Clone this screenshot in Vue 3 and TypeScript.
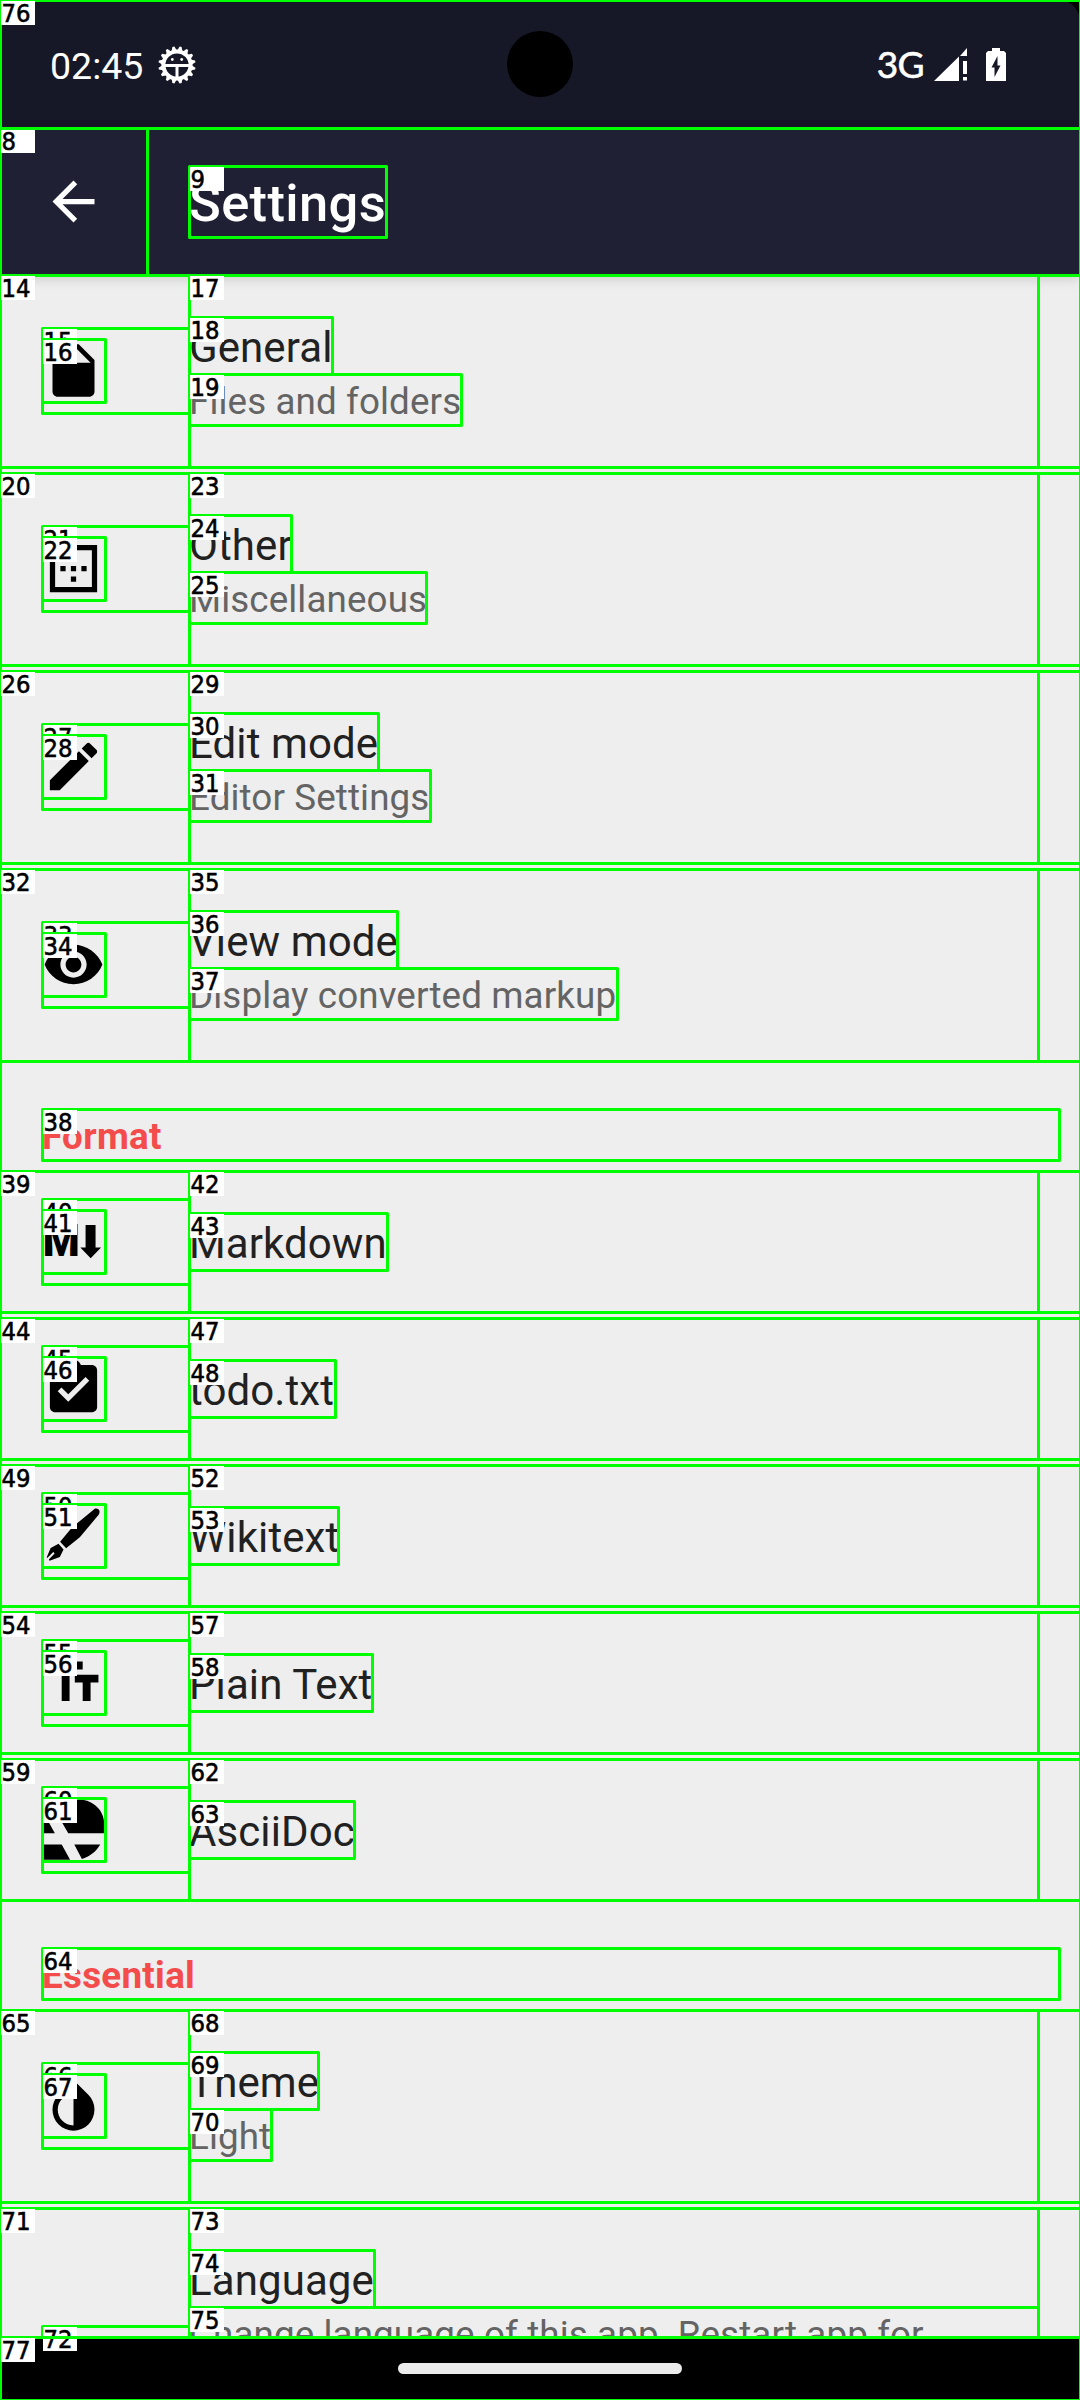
<script setup lang="ts">
interface Item {
  title: string
  summary?: string
  icon: string
}
interface Section {
  heading?: string
  items: Item[]
}
type Mark = [label: string, x1: number, y1: number, x2: number, y2: number]

const icons: Record<string, string> = {
  file: 'M6 2c-1.1 0-1.99.9-1.99 2L4 20c0 1.1.89 2 1.99 2H18c1.1 0 2-.9 2-2V8l-6-6H6zm7 7V3.5L18.5 9H13z',
  border: 'M13 7h-2v2h2V7zm0 4h-2v2h2v-2zm4 0h-2v2h2v-2zM3 3v18h18V3H3zm16 16H5V5h14v14zm-6-4h-2v2h2v-2zm-4-4H7v2h2v-2z',
  edit: 'M3 17.25V21h3.75L17.81 9.94l-3.75-3.75L3 17.25zM20.71 7.04c.39-.39.39-1.02 0-1.41l-2.34-2.34c-.39-.39-1.02-.39-1.41 0l-1.83 1.83 3.75 3.75 1.83-1.83z',
  eye: 'M12 4.5C7 4.5 2.73 7.61 1 12c1.73 4.39 6 7.5 11 7.5s9.27-3.11 11-7.5c-1.73-4.39-6-7.5-11-7.5zM12 17c-2.76 0-5-2.24-5-5s2.24-5 5-5 5 2.24 5 5-2.24 5-5 5zm0-8c-1.66 0-3 1.34-3 3s1.34 3 3 3 3-1.34 3-3-1.34-3-3-3z',
  markdown: 'M16.6 5.7h3.8v8.6h2.1L18.55 18.4 14.6 14.3h2z',
  todo: 'M19 3h-4.18C14.4 1.84 13.3 1 12 1c-1.3 0-2.4.84-2.82 2H5c-1.1 0-2 .9-2 2v14c0 1.1.9 2 2 2h14c1.1 0 2-.9 2-2V5c0-1.1-.9-2-2-2zm-7 0c.55 0 1 .45 1 1s-.45 1-1 1-1-.45-1-1 .45-1 1-1zm-2 14l-4-4 1.41-1.41L10 14.17l6.59-6.59L18 9l-8 8z',
  pen: 'M21.9 3.1c.2-.9-.9-1.6-1.8-1.3L11.5 8.9 6.9 14.4l2.3 2.5 5.2-4.2L21.5 4.2c.2-.3.4-.7.4-1.1zM6.3 15.1 8.2 17.3 6.8 20.2 2.9 21.6 2.6 21.1 4.8 18.9 4.3 18.3 2 20.6 1.8 20.3 3.3 16.8z',
  text: 'M2.5 4v3h5v12h3V7h5V4h-13zm19 5h-9v3h3v7h3v-7h3V9z',
  ascii: 'M2.5.5H14.3C19.8 1 23.3 4.8 23.6 8.8V13.4H10zM.4 5.3 4.9 13.4H.4zM.4 17.7H7.5L10.7 23.5H.4zM12.3 17.7H22.2C20.6 20.4 18.1 22.4 15.2 23.2z',
  drop: 'M17.66 7.93L12 2.27 6.34 7.93c-3.12 3.12-3.12 8.19 0 11.31C7.9 20.8 9.95 21.58 12 21.58c2.05 0 4.1-.78 5.66-2.34 3.12-3.12 3.12-8.19 0-11.31zM12 19.59c-1.6 0-3.11-.62-4.24-1.76C6.62 16.69 6 15.19 6 13.59s.62-3.11 1.76-4.24L12 5.1v14.49z',
}

const sections: Section[] = [
  {
    items: [
      { title: 'General', summary: 'Files and folders', icon: 'file' },
      { title: 'Other', summary: 'Miscellaneous', icon: 'border' },
      { title: 'Edit mode', summary: 'Editor Settings', icon: 'edit' },
      { title: 'View mode', summary: 'Display converted markup', icon: 'eye' },
    ],
  },
  {
    heading: 'Format',
    items: [
      { title: 'Markdown', icon: 'markdown' },
      { title: 'todo.txt', icon: 'todo' },
      { title: 'Wikitext', icon: 'pen' },
      { title: 'Plain Text', icon: 'text' },
      { title: 'AsciiDoc', icon: 'ascii' },
    ],
  },
  {
    heading: 'Essential',
    items: [
      { title: 'Theme', summary: 'Light', icon: 'drop' },
      { title: 'Language', summary: 'Change language of this app. Restart app for', icon: '' },
    ],
  },
]

/* Outlines for one preference row: row, icon frame, icon, text column, title, summary */
function rowMarks(first: number, top: number, titleRight: number, summaryRight?: number): Mark[] {
  const tall = summaryRight !== undefined
  const h = tall ? 192 : 141
  const dy = tall ? 0 : -25
  const n = (i: number) => String(first + i)
  const marks: Mark[] = [
    [n(0), 0, top, 1080, top + h],
    [n(1), 42, top + 53 + dy, 189, top + 138 + dy],
    [n(2), 42, top + 64 + dy, 105, top + 127 + dy],
    [n(3), 189, top, 1038, top + h],
    [n(4), 189, top + 42, titleRight, top + 99],
  ]
  if (summaryRight !== undefined) marks.push([n(5), 189, top + 99, summaryRight, top + 150])
  return marks
}

const marks: Mark[] = [
  ['', 0, 0, 1080, 2400],
  ['', 0, 128, 1080, 275],
  ['8', 0, 128, 147, 275],
  ['9', 189, 166, 386, 237],
  ...rowMarks(14, 275, 332, 461),
  ...rowMarks(20, 473, 291, 426),
  ...rowMarks(26, 671, 378, 430),
  ...rowMarks(32, 869, 397, 617),
  ['38', 42, 1109, 1059, 1160],
  ...rowMarks(39, 1171, 387),
  ...rowMarks(44, 1318, 335),
  ...rowMarks(49, 1465, 338),
  ...rowMarks(54, 1612, 372),
  ...rowMarks(59, 1759, 354),
  ['64', 42, 1948, 1059, 1999],
  ...rowMarks(65, 2010, 318, 271),
  ['71', 0, 2208, 1080, 2337],
  ['72', 42, 2326, 189, 2337],
  ['73', 189, 2208, 1038, 2337],
  ['74', 189, 2250, 374, 2307],
  ['75', 189, 2307, 1038, 2337],
  ['76', 0, 0, 1080, 128],
  ['77', 0, 2337, 1080, 2400],
]

const teeth = Array.from({ length: 16 }, (_, i) => i * 22.5 + 11.25)
</script>

<template>
  <div class="screen">
    <header class="status">
      <div class="status-left">
        <span class="clock">02:45</span>
        <svg class="bug" viewBox="0 0 38 38">
          <path v-for="a in teeth" :key="a" d="M15.8 6 L18 .4 H20 L22.2 6z" fill="#fff" :transform="`rotate(${a} 19 19)`" />
          <circle cx="19" cy="19" r="13.6" fill="none" stroke="#fff" stroke-width="4" />
          <path d="M5 19.5H33M19 19.5V33" stroke="#fff" stroke-width="3" />
          <circle cx="14.3" cy="13.5" r="1.4" fill="#fff" />
          <circle cx="23.7" cy="13.5" r="1.4" fill="#fff" />
        </svg>
      </div>
      <div class="camera"></div>
      <div class="status-right">
        <span class="network">3G</span>
        <svg class="signal" viewBox="0 0 33 33">
          <path d="M0 33 25 8.5V33zM26 8 33 0V8zM29 13h4v13h-4zM29 29h4v3.5h-4z" fill="#fff" />
        </svg>
        <svg class="battery" viewBox="0 0 20 33">
          <path d="M6 0h8v3h4l2 2v28H0V5l2-2h4z" fill="#fff" />
          <path d="M11.5 8 5.5 19.5H8.5V29L14.5 17.5H11.5z" fill="#171827" />
        </svg>
      </div>
      <svg class="corner" viewBox="0 0 21 21"><path d="M0 0H21V21A21 21 0 0 0 0 0z" /></svg>
    </header>

    <nav class="toolbar">
      <svg class="back" viewBox="0 0 24 24">
        <path d="M20 11H7.83l5.59-5.59L12 4l-8 8 8 8 1.41-1.41L7.83 13H20v-2z" fill="#fff" />
      </svg>
      <h1>Settings</h1>
    </nav>

    <main class="list">
      <section v-for="(section, s) in sections" :key="s" class="section">
        <h2 v-if="section.heading">{{ section.heading }}</h2>
        <div v-for="item in section.items" :key="item.title" class="row" :class="{ tall: item.summary }">
          <div class="icon">
            <svg v-if="item.icon" viewBox="0 0 24 24">
              <path :d="icons[item.icon]" />
              <text v-if="item.icon === 'markdown'" x="0.3" y="17.6" textLength="14.1" lengthAdjust="spacingAndGlyphs" class="mark-m">M</text>
            </svg>
          </div>
          <div class="copy">
            <div class="title">{{ item.title }}</div>
            <div v-if="item.summary" class="summary">{{ item.summary }}</div>
          </div>
        </div>
      </section>
    </main>

    <footer class="navbar"><div class="pill"></div></footer>

    <svg class="overlay" viewBox="0 0 1080 2400">
      <g v-for="(m, i) in marks" :key="i">
        <rect :x="m[1] + 0.5" :y="m[2] + 0.5" :width="m[3] - m[1]" :height="m[4] - m[2]" class="frame" />
        <template v-if="m[0]">
          <rect :x="m[1] + 1" :y="m[2] + 1" width="34" height="24" fill="#fff" />
          <text :x="m[1] + 1.5" :y="m[2] + 21.5" :textLength="m[0].length * 14.5" lengthAdjust="spacingAndGlyphs" class="tag">{{ m[0] }}</text>
        </template>
      </g>
    </svg>
  </div>
</template>

<style>
body {
  margin: 0;
}
</style>

<style scoped>
.screen {
  position: relative;
  display: flex;
  flex-direction: column;
  width: 1080px;
  height: 2400px;
  overflow: hidden;
  background: #eee;
  font-family: Roboto, "Liberation Sans", sans-serif;
}
.status {
  position: relative;
  display: flex;
  justify-content: space-between;
  align-items: center;
  box-sizing: border-box;
  flex: none;
  height: 128px;
  padding: 0 74px 0 50px;
  background: #171827;
  color: #fff;
}
.status-left,
.status-right {
  display: flex;
  align-items: center;
}
.status-left {
  width: 383px;
}
.clock {
  width: 93px;
  margin-top: 4px;
  font-size: 37.5px;
  line-height: 44px;
}
.bug {
  width: 38px;
  height: 38px;
  margin-left: 15px;
  margin-top: 2px;
}
.camera {
  position: absolute;
  left: 507px;
  top: 31px;
  width: 66px;
  height: 66px;
  border-radius: 50%;
  background: #000;
}
.network {
  font: 400 37px/44px Lato, sans-serif;
  letter-spacing: -0.6px;
  -webkit-text-stroke: 0.6px #fff;
  margin-right: 10px;
}
.signal {
  width: 33px;
  height: 33px;
  margin-right: 19px;
}
.battery {
  width: 20px;
  height: 33px;
}
.corner {
  position: absolute;
  top: 0;
  right: 0;
  width: 21px;
  height: 21px;
}
.toolbar {
  position: relative;
  z-index: 1;
  display: flex;
  align-items: center;
  flex: none;
  height: 147px;
  padding-left: 42px;
  background: #1f2034;
  box-shadow: 0 3px 12px rgba(0, 0, 0, 0.16);
}
.back {
  width: 63px;
  height: 63px;
}
h1 {
  margin: 2px 0 0 84px;
  color: #fff;
  font-size: 52.5px;
  font-weight: 500;
  letter-spacing: 0.35px;
  line-height: 70px;
}
.list {
  height: 2062px;
  flex: none;
  overflow: hidden;
}
h2 {
  height: 51px;
  margin: 0;
  padding: 50px 42px 9px;
  color: #f44b4b;
  font-size: 36.75px;
  font-weight: 700;
  letter-spacing: 0.3px;
  line-height: 51px;
}
.row {
  display: flex;
  box-sizing: border-box;
  height: 147px;
  padding: 39px 42px 0;
}
.row:last-child {
  height: 141px;
}
.row.tall {
  height: 198px;
}
.row.tall:last-child {
  height: 192px;
}
.icon {
  flex: none;
  width: 147px;
}
.icon svg {
  display: block;
  width: 63px;
  height: 63px;
}
.tall .icon {
  padding-top: 25px;
}
.mark-m {
  font-size: 16.6px;
  font-weight: 900;
}
.copy {
  padding-top: 5px;
  white-space: nowrap;
}
.title {
  color: #212121;
  font-size: 42px;
  letter-spacing: 0.1px;
  line-height: 57px;
}
.summary {
  color: #646464;
  font-size: 36.75px;
  letter-spacing: 0.12px;
  line-height: 51px;
}
.navbar {
  display: flex;
  flex: 1;
  justify-content: center;
  align-items: flex-start;
  background: #000;
}
.pill {
  width: 284px;
  height: 11px;
  margin-top: 26px;
  border-radius: 6px;
  background: #ebebeb;
}
.overlay {
  position: absolute;
  z-index: 2;
  inset: 0;
  width: 1080px;
  height: 2400px;
}
.frame {
  fill: none;
  stroke: #0f0;
  stroke-width: 3;
  stroke-linejoin: round;
}
.tag {
  font: 400 24px "DejaVu Sans", sans-serif;
  fill: #000;
  stroke: #000;
  stroke-width: 0.6;
}
</style>
